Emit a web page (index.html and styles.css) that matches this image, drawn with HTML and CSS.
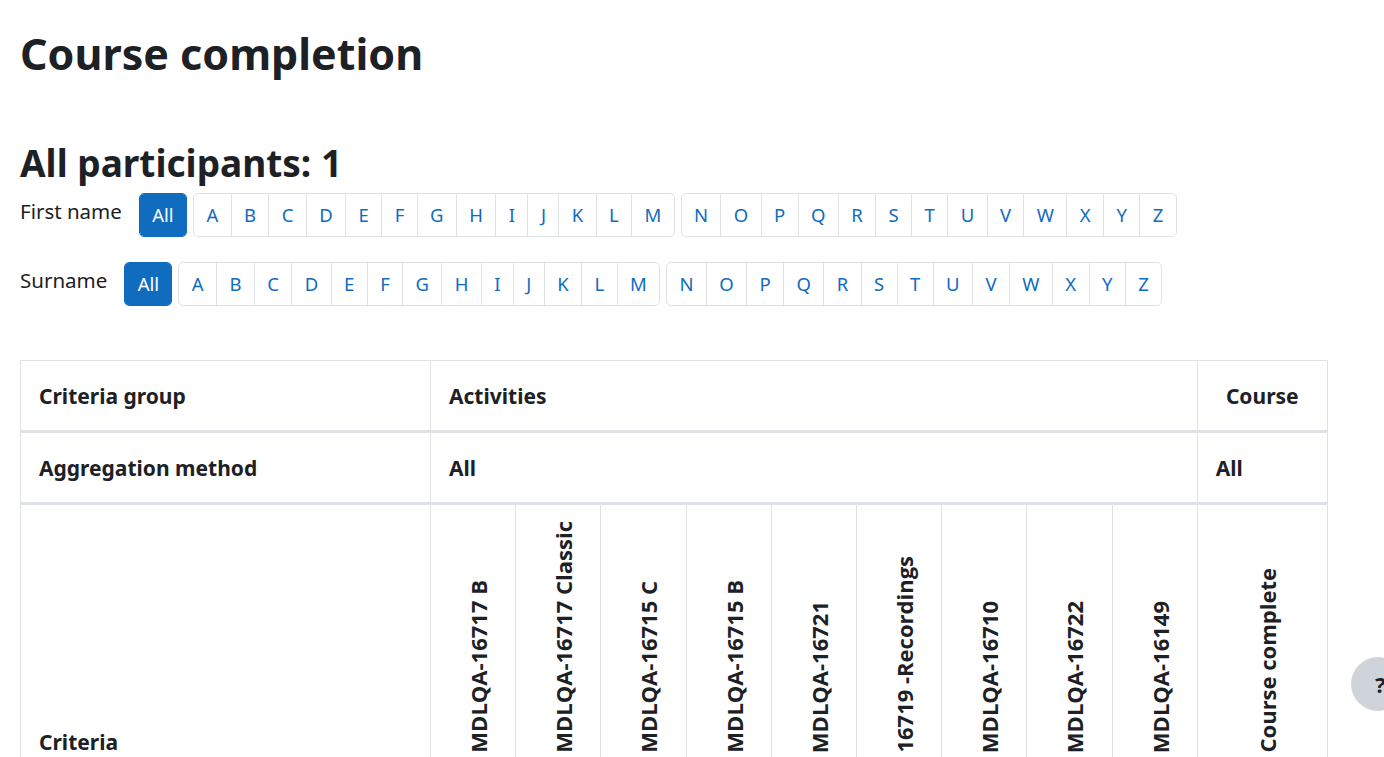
FILE: index.html
```html
<!doctype html>
<html lang="en">
<head>
    <meta charset="UTF-8">
    <title>Course completion</title>
    <link rel="stylesheet" href="styles.css">
</head>
<body>
<div id="page">
    <h1>Course completion</h1>
    <h2>All participants: 1</h2>

    <div class="initialbar">
        <span class="initialbar-label">First name</span>
        <ul class="pagination single"><li class="active"><a href="#">All</a></li></ul>
        <ul class="pagination">
            <li><a href="#">A</a></li><li><a href="#">B</a></li><li><a href="#">C</a></li><li><a href="#">D</a></li><li><a href="#">E</a></li><li><a href="#">F</a></li><li><a href="#">G</a></li><li><a href="#">H</a></li><li><a href="#">I</a></li><li><a href="#">J</a></li><li><a href="#">K</a></li><li><a href="#">L</a></li><li><a href="#">M</a></li>
        </ul>
        <ul class="pagination">
            <li><a href="#">N</a></li><li><a href="#">O</a></li><li><a href="#">P</a></li><li><a href="#">Q</a></li><li><a href="#">R</a></li><li><a href="#">S</a></li><li><a href="#">T</a></li><li><a href="#">U</a></li><li><a href="#">V</a></li><li><a href="#">W</a></li><li><a href="#">X</a></li><li><a href="#">Y</a></li><li><a href="#">Z</a></li>
        </ul>
    </div>

    <div class="initialbar">
        <span class="initialbar-label">Surname</span>
        <ul class="pagination single"><li class="active"><a href="#">All</a></li></ul>
        <ul class="pagination">
            <li><a href="#">A</a></li><li><a href="#">B</a></li><li><a href="#">C</a></li><li><a href="#">D</a></li><li><a href="#">E</a></li><li><a href="#">F</a></li><li><a href="#">G</a></li><li><a href="#">H</a></li><li><a href="#">I</a></li><li><a href="#">J</a></li><li><a href="#">K</a></li><li><a href="#">L</a></li><li><a href="#">M</a></li>
        </ul>
        <ul class="pagination">
            <li><a href="#">N</a></li><li><a href="#">O</a></li><li><a href="#">P</a></li><li><a href="#">Q</a></li><li><a href="#">R</a></li><li><a href="#">S</a></li><li><a href="#">T</a></li><li><a href="#">U</a></li><li><a href="#">V</a></li><li><a href="#">W</a></li><li><a href="#">X</a></li><li><a href="#">Y</a></li><li><a href="#">Z</a></li>
        </ul>
    </div>

    <table class="completion">
        <colgroup>
            <col class="c-first">
            <col class="c-act"><col class="c-act"><col class="c-act"><col class="c-act"><col class="c-act"><col class="c-act"><col class="c-act"><col class="c-act"><col class="c-act">
            <col class="c-course">
        </colgroup>
        <tr class="head">
            <th>Criteria group</th>
            <th colspan="9">Activities</th>
            <th class="center">Course</th>
        </tr>
        <tr class="head">
            <th>Aggregation method</th>
            <th colspan="9">All</th>
            <th>All</th>
        </tr>
        <tr class="criteria">
            <th>Criteria</th>
            <th><span class="rotated">MDLQA-16717 B</span></th>
            <th><span class="rotated">MDLQA-16717 Classic</span></th>
            <th><span class="rotated">MDLQA-16715 C</span></th>
            <th><span class="rotated">MDLQA-16715 B</span></th>
            <th><span class="rotated">MDLQA-16721</span></th>
            <th><span class="rotated">16719 -Recordings</span></th>
            <th><span class="rotated">MDLQA-16710</span></th>
            <th><span class="rotated">MDLQA-16722</span></th>
            <th><span class="rotated">MDLQA-16149</span></th>
            <th><span class="rotated">Course complete</span></th>
        </tr>
    </table>
</div>

<button class="btn-footer-popover">?</button>
</body>
</html>
```

FILE: styles.css
```css
*{margin:0;padding:0;box-sizing:border-box;}
html{overflow:hidden;}
body{
	font-family:"Noto Sans","Open Sans",sans-serif;
	font-size:21px;
	line-height:1.5;
	color:#1d2125;
	background:#fff;
}
#page{
	padding:28px 20px 0 20px;
}
h1{
	font-size:43px;
	font-weight:700;
	line-height:1.2;
	margin-bottom:61px;
}
h2{
	font-size:37px;
	font-weight:700;
	line-height:1.2;
	margin-bottom:8px;
}

/* initials bar */
.initialbar{
	display:flex;
	align-items:flex-start;
	margin-bottom:25px;
}
.initialbar-label{
	font-size:20.5px;
	line-height:30px;
	margin-right:17px;
	padding-top:3px;
}
.pagination{
	display:flex;
	list-style:none;
	border:1px solid #dee2e6;
	border-radius:5px;
	margin-right:6px;
}
.pagination li a{
	display:block;
	padding:7px 12.4px;
	font-size:18.5px;
	line-height:28px;
	color:#0f6cbf;
	text-decoration:none;
	border-left:1px solid #dee2e6;
}
.pagination li:first-child a{border-left:0;}
.pagination.single{
	border-color:#0f6cbf;
}
.pagination li.active a{
	background:#0f6cbf;
	color:#fff;
	border-radius:4px;
}

/* completion table */
.completion{
	margin-top:54px;
	width:1307px;
	table-layout:fixed;
	border-collapse:collapse;
	border:1px solid #dee2e6;
}
.c-first{width:410px;}
.c-act{width:85.2px;}
.c-course{width:130px;}
.completion th{
	text-align:left;
	font-weight:700;
	padding:20px 18px 19px 18px;
	line-height:30px;
	border:1px solid #dee2e6;
	vertical-align:middle;
}
.completion tr.head th{
	border-bottom:3px solid #dee2e6;
}
.completion th.center{text-align:center;}
.completion tr.criteria th{
	vertical-align:bottom;
	padding:17px 18px 8px 18px;
}
.completion tr.criteria th + th{
	text-align:center;
	padding:16px 0 5px 10px;
}
.rotated{
	display:inline-block;
	writing-mode:vertical-rl;
	transform:rotate(180deg);
	white-space:nowrap;
	font-family:"Open Sans","Noto Sans",sans-serif;
	font-size:22px;
	line-height:30px;
}

/* help button */
.btn-footer-popover{
	position:fixed;
	left:1351px;
	top:657px;
	width:54px;
	height:54px;
	border:0;
	border-radius:50%;
	background:#ced4da;
	color:#1d2125;
	font-family:"Noto Sans",sans-serif;
	font-weight:700;
	font-size:22px;
	text-align:left;
	padding-left:24px;
}
```
